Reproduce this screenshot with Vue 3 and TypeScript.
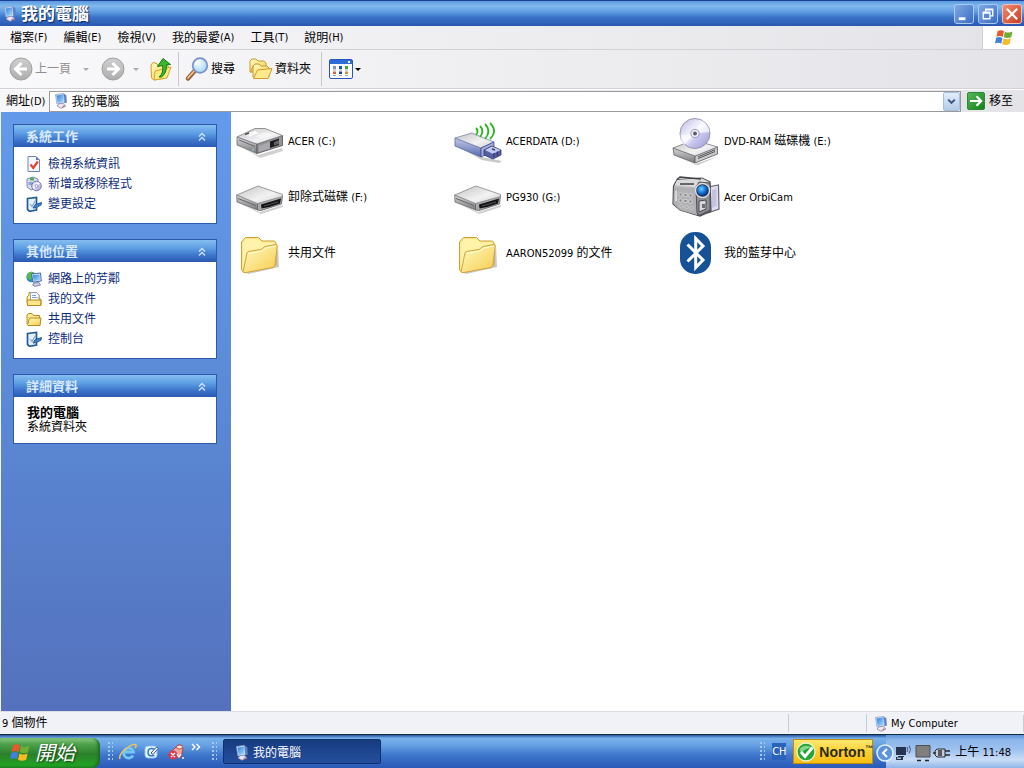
<script setup lang="ts">
import { h, ref } from 'vue'

interface Entry { text: string; icon: string }
interface Panel { title: string; links: Entry[] }

// Chinese runs are set one pixel larger than Latin runs.
const Txt = (props: { text: string }) =>
  (props.text.match(/[\u2e80-\u9fff]+|[^\u2e80-\u9fff]+/g) ?? []).map((run) =>
    h('span', { class: /[\u2e80-\u9fff]/.test(run) ? 'run-han' : 'run-latin' }, run),
  )
Txt.props = ['text']

const address = ref('我的電腦')
const menus = ['檔案(F)', '編輯(E)', '檢視(V)', '我的最愛(A)', '工具(T)', '說明(H)']

const panels: Panel[] = [
  {
    title: '系統工作',
    links: [
      { text: '檢視系統資訊', icon: 'i-info' },
      { text: '新增或移除程式', icon: 'i-programs' },
      { text: '變更設定', icon: 'i-control' },
    ],
  },
  {
    title: '其他位置',
    links: [
      { text: '網路上的芳鄰', icon: 'i-network' },
      { text: '我的文件', icon: 'i-docs' },
      { text: '共用文件', icon: 'i-folder-small' },
      { text: '控制台', icon: 'i-control' },
    ],
  },
]

const items: Entry[] = [
  { text: 'ACER (C:)', icon: 'i-hdd' },
  { text: 'ACERDATA (D:)', icon: 'i-usb' },
  { text: 'DVD-RAM 磁碟機 (E:)', icon: 'i-dvd' },
  { text: '卸除式磁碟 (F:)', icon: 'i-removable' },
  { text: 'PG930 (G:)', icon: 'i-removable' },
  { text: 'Acer OrbiCam', icon: 'i-cam' },
  { text: '共用文件', icon: 'i-folder' },
  { text: 'AARON52099 的文件', icon: 'i-folder' },
  { text: '我的藍芽中心', icon: 'i-bluetooth' },
]
</script>

<template>
  <div class="window">
    <svg class="symbols" width="0" height="0" aria-hidden="true">
      <defs>
        <linearGradient id="g-top" x1="0" y1="0" x2="1" y2="1"><stop offset="0" stop-color="#c4c4c6" /><stop offset=".6" stop-color="#f2f2f3" /><stop offset="1" stop-color="#cfcfd1" /></linearGradient>
        <linearGradient id="g-side" x1="0" y1="0" x2="0" y2="1"><stop offset="0" stop-color="#d8d8da" /><stop offset="1" stop-color="#77777b" /></linearGradient>
        <linearGradient id="g-folder" x1="0" y1="0" x2="1" y2="1"><stop offset="0" stop-color="#fffbc4" /><stop offset="1" stop-color="#f6cc4e" /></linearGradient>
        <linearGradient id="g-disc" x1="0" y1="0" x2="1" y2="1"><stop offset="0" stop-color="#b9b7e2" /><stop offset=".45" stop-color="#f6f6ff" /><stop offset=".6" stop-color="#c9c8f0" /><stop offset="1" stop-color="#9b98cf" /></linearGradient>
        <linearGradient id="g-screen" x1="0" y1="0" x2="1" y2="1"><stop offset="0" stop-color="#2f7fe0" /><stop offset="1" stop-color="#a8defc" /></linearGradient>
        <linearGradient id="g-blue" x1="0" y1="0" x2="0" y2="1"><stop offset="0" stop-color="#c3c9e8" /><stop offset="1" stop-color="#5a6ab0" /></linearGradient>
        <radialGradient id="g-lens" cx=".4" cy=".35" r=".6"><stop offset="0" stop-color="#6fd0ff" /><stop offset=".6" stop-color="#1778d8" /><stop offset="1" stop-color="#0a3c90" /></radialGradient>
        <linearGradient id="g-round" x1="0" y1="0" x2="0" y2="1"><stop offset="0" stop-color="#d0d0d0" /><stop offset="1" stop-color="#adadad" /></linearGradient>
        <linearGradient id="g-go" x1="0" y1="0" x2="1" y2="1"><stop offset="0" stop-color="#58b858" /><stop offset="1" stop-color="#11801a" /></linearGradient>
        <radialGradient id="g-glass" cx=".4" cy=".35" r=".7"><stop offset="0" stop-color="#f4fcff" /><stop offset="1" stop-color="#9fd3f5" /></radialGradient>
      </defs>

      <symbol id="i-computer" viewBox="0 0 16 16">
        <path d="M2.500 1.500 10.500 .5 11.500 10 4 11z" fill="#dfe8f6" stroke="#8d9fc6" stroke-width=".8" />
        <path d="M3.500 2.400 9.900 1.600 10.600 9 4.800 9.900z" fill="url(#g-screen)" />
        <path d="M10.700 .5 13.300 2.200 13.800 9.800 11.700 10z" fill="#5c7fc4" />
        <path d="M6 10.800 10 10.200 12.800 13 8 15.300 4 13z" fill="#e8e9f2" stroke="#8887a8" stroke-width=".8" />
        <path d="M10 12.500 12.800 13 9 15z" fill="#c86a80" />
      </symbol>

      <symbol id="i-flag" viewBox="0 0 22 20">
        <path d="M4 2.200Q8 .2 11 2.600L9.600 9Q6.400 7 2.600 8.600z" fill="#e8582c" />
        <path d="M12 3Q16 5 20.400 2.800L19 9.200Q15 11 10.700 9.200z" fill="#6dae34" />
        <path d="M2.300 9.800Q6 8 9.300 10.200L8 16.200Q4.600 14.400 1 16z" fill="#3f7fe0" />
        <path d="M10.400 10.600Q14.600 12.400 18.600 10.400L17.200 16.800Q13 18.800 9 16.800z" fill="#f8bb24" />
      </symbol>

      <symbol id="i-back" viewBox="0 0 24 24">
        <circle cx="12" cy="12" r="11" fill="url(#g-round)" stroke="#a0a0a0" />
        <path d="M12.500 6 6.500 12 12.500 18M7 12H18" fill="none" stroke="#fff" stroke-width="3" />
      </symbol>
      <symbol id="i-forward" viewBox="0 0 24 24">
        <circle cx="12" cy="12" r="11" fill="url(#g-round)" stroke="#a0a0a0" />
        <path d="M11.500 6 17.500 12 11.500 18M17 12H6" fill="none" stroke="#fff" stroke-width="3" />
      </symbol>
      <symbol id="i-up" viewBox="0 0 22 24">
        <path d="M1 8 3 5.500 7 6.500 8 9 17 7.500 19 11 16 21 4 23 1.500 21z" fill="url(#g-folder)" stroke="#d09c22" />
        <path d="M5 14 21 10 17 21 4 23z" fill="#fce982" stroke="#d9a62d" />
        <path d="M9 20Q14 16 12.500 8.500L7.500 9.500 13 1.500 20.500 7.500 16.400 7.800Q17 16 11.500 20z" fill="#39b82d" stroke="#137a13" />
      </symbol>
      <symbol id="i-search" viewBox="0 0 24 24">
        <path d="M10 13.500 3 21.500" stroke="#96613a" stroke-width="4.400" stroke-linecap="round" />
        <path d="M10 13 3 21" stroke="#f1c28b" stroke-width="1.800" stroke-linecap="round" />
        <circle cx="15" cy="8.500" r="7.300" fill="url(#g-glass)" stroke="#7793c9" stroke-width="1.700" />
        <path d="M10.500 8Q11.500 4 15.500 3.700" fill="none" stroke="#fff" stroke-width="1.800" />
      </symbol>
      <symbol id="i-folders" viewBox="0 0 24 22">
        <path d="M1 14V3L3 1H7L9 3H15L17 5V14z" fill="url(#g-folder)" stroke="#c99a2b" />
        <path d="M4 19V8L6 6H10L12 8H18L20 10V19z" fill="url(#g-folder)" stroke="#c99a2b" />
        <path d="M4.500 20.500 8.500 12 23 10.500 19 20.500z" fill="#fdeb8e" stroke="#cf9d28" />
        <path d="M1.500 14.500 4 8" stroke="#c99a2b" />
      </symbol>
      <symbol id="i-views" viewBox="0 0 24 20">
        <rect x=".5" y=".5" width="23" height="19" rx="1.500" fill="#fff" stroke="#2656b8" />
        <path d="M1 1H23V5H1z" fill="#2c6cd8" />
        <path d="M19 2H21V4H19z" fill="#fff" />
        <path d="M4 7H7V10H4z" fill="#8294b8" /><path d="M10 7H13V10H10z" fill="#1d55a6" /><path d="M16 7H19V10H16z" fill="#3ba934" />
        <path d="M4 12.500H7V15H4z" fill="#de6541" /><path d="M10 12.500H13V15H10z" fill="#16469b" /><path d="M16 12.500H19V15H16z" fill="#d18c3c" />
        <path d="M4 11H7M10 11H13M16 11H19M4 16.500H7M10 16.500H13M16 16.500H19" stroke="#9ca7c0" />
      </symbol>
      <symbol id="i-go" viewBox="0 0 18 18">
        <rect x=".5" y=".5" width="17" height="17" rx="1.500" fill="url(#g-go)" stroke="#2b8a35" />
        <path d="M3 9H14M9.500 4.300 14.200 9 9.500 13.700" fill="none" stroke="#fff" stroke-width="2.200" />
      </symbol>

      <symbol id="i-info" viewBox="0 0 16 16">
        <path d="M2 .5H10L13.500 4V15.500H2z" fill="#f6f8ff" stroke="#7184b0" />
        <path d="M10 .5V4H13.500z" fill="#5a78b6" />
        <path d="M4.500 8.500 7.300 12 11.800 5.500" fill="none" stroke="#dc4632" stroke-width="2.200" />
      </symbol>
      <symbol id="i-programs" viewBox="0 0 16 16">
        <path d="M1 3 7 1 12 3V11L5 14 1 11z" fill="#d8def2" stroke="#7e8cbb" />
        <path d="M4 1.500H8V4.500H4z" fill="#55b05c" /><path d="M2.500 6H7V9H2.500z" fill="#8ea3dc" />
        <circle cx="10.500" cy="10" r="4.800" fill="url(#g-disc)" stroke="#7778b2" />
        <circle cx="10.500" cy="10" r="1.400" fill="#fff" stroke="#7778b2" stroke-width=".7" />
      </symbol>
      <symbol id="i-control" viewBox="0 0 16 16">
        <path d="M1.500 2.500 10.500 1.500V14L3.500 15.300 1.500 13.500z" fill="#e6f1fd" stroke="#20599f" stroke-width="1.700" />
        <path d="M4 8 6 10.500 9.500 4.500" fill="none" stroke="#83a6cd" stroke-width="1.200" />
        <path d="M7 12 9.200 8.600 15.500 6.600 15 9 10.500 11.500z" fill="#4286c8" stroke="#20599f" />
      </symbol>
      <symbol id="i-network" viewBox="0 0 16 16">
        <circle cx="5.500" cy="6" r="5.200" fill="#2c8cc4" />
        <path d="M1 4Q3 0 7 1L6 4 8 6 4 9Q1 8 1 4z" fill="#56bb48" />
        <path d="M5.500 3 14.500 2 15.300 10 7 11.200z" fill="#dce6f7" stroke="#3a5ba4" stroke-width=".9" />
        <path d="M6.700 4.200 13.500 3.400 14.100 9.100 7.900 10z" fill="url(#g-screen)" />
        <path d="M8 12 13 11.500 14.500 14 9 15.500 6.500 14z" fill="#cdd0e2" stroke="#69709a" stroke-width=".8" />
      </symbol>
      <symbol id="i-docs" viewBox="0 0 16 16">
        <path d="M1 6 3 4V1.500H10.500L13 4V7L15 8.500V14.500H1.500z" fill="url(#g-folder)" stroke="#c38d1f" />
        <path d="M4.500 1.500H10.500L13 4V12H4.500z" fill="#fbfcff" stroke="#7f92bd" stroke-width=".8" />
        <path d="M6 4.500H10M6 6.500H11.500" stroke="#6f9bd0" stroke-width=".9" />
        <path d="M1 9H15L14.500 14.500H1.500z" fill="#fde789" stroke="#bd8820" />
      </symbol>
      <symbol id="i-folder-small" viewBox="0 0 16 16">
        <path d="M1 13V4L2.500 2.500H6L7.500 4.500H13.500V7" fill="#fceb92" stroke="#b88b1e" />
        <path d="M1.500 14 3.500 7H15L14 14.500H2z" fill="url(#g-folder)" stroke="#b88b1e" />
      </symbol>

      <symbol id="i-hdd" viewBox="0 0 48 48">
        <path d="M4 29 22 38 46 31 47 34 24 41z" fill="#777" opacity=".35" />
        <path d="M1 20 21 27V36.500L1 28z" fill="url(#g-side)" stroke="#6d6d70" stroke-width=".8" />
        <path d="M21 27 46.500 18.500V28.500L21 36.500z" fill="#939397" stroke="#4e4e51" stroke-width=".8" />
        <path d="M1 20 19 11.500 29 11.500 46.500 18.500 21 27z" fill="url(#g-top)" stroke="#7b7b7e" stroke-width=".8" />
        <path d="M23 29 34 25V31.500L23 35z" fill="#a9a9ad" />
        <path d="M34 24.500 43 21.500V28L34 31z" fill="#1b1b1d" />
        <path d="M38 25 43 23V27L38 28.500z" fill="#626267" />
        <path d="M10 18 20 14.500M13 19 22 15.500" stroke="#fff" stroke-width="1.500" />
        <path d="M9 17.500 13 16" stroke="#4d4d50" stroke-width="1.500" />
        <path d="M19 19.500Q28 13 37 17.500Q31 23 19 19.500z" fill="#f8f8f9" opacity=".7" />
        <path d="M3 23 19 29.500" stroke="#68686c" /><path d="M17 32V34" stroke="#9df" />
      </symbol>
      <symbol id="i-removable" viewBox="0 0 48 48">
        <path d="M5 31 24 39 47 32V34L25 41z" fill="#777" opacity=".35" />
        <path d="M.7 22 21.500 29.500V37L1 29z" fill="url(#g-side)" stroke="#707074" stroke-width=".8" />
        <path d="M21.500 29.500 46.500 22.500 45.500 31 25 37.500 21.500 37z" fill="#a9a9ad" stroke="#5f5f63" stroke-width=".8" />
        <path d="M.7 22 22 13 46.500 21.500 46.500 23.500 21.500 30.500z" fill="url(#g-top)" stroke="#858588" stroke-width=".8" />
        <path d="M25 31.500 45 25.500 44 30.500Q35 34 25.500 35.500z" fill="#151517" />
        <path d="M28 33 42 29" stroke="#505054" />
        <path d="M2 25.500 20 32.500" stroke="#636367" />
      </symbol>
      <symbol id="i-usb" viewBox="0 0 48 48">
        <path d="M4 30 28 40 48 44 45 46 28 43z" fill="#777" opacity=".4" />
        <path d="M1 21 27 31V40L1 29z" fill="url(#g-blue)" stroke="#5966a5" stroke-width=".8" />
        <path d="M1 21 18 16 40 25 27 31z" fill="url(#g-top)" stroke="#7c84ae" stroke-width=".8" />
        <path d="M27 31 40 25V34L27 40z" fill="#a4add8" stroke="#3d488d" stroke-width=".8" />
        <path d="M30 33 38 29 47 33V38L39 42 30 38z" fill="#5661a5" stroke="#29346e" stroke-width=".8" />
        <path d="M31 33 38 29.500 46.500 33 39 37z" fill="#c4caed" />
        <path d="M38 32 41 33M40 36V40M43.500 34.500V39" stroke="#353b72" stroke-width="1.500" />
        <path d="M22 11Q25 14 22 18M26 9Q31 14 26 20M31 7Q38 14 31 22M36 6Q44 14 36 22" fill="none" stroke="#28b51f" stroke-width="1.800" />
      </symbol>
      <symbol id="i-dvd" viewBox="0 0 48 48">
        <path d="M4 39 23 47 47 39 25 48.500z" fill="#777" opacity=".4" />
        <path d="M1 31 23 39V46L2 38z" fill="url(#g-side)" stroke="#626266" stroke-width=".8" />
        <path d="M23 39 45.500 30V37L23 46z" fill="#c9c9cc" stroke="#5b5b60" stroke-width=".8" />
        <path d="M1 31 22 23 45.500 30 23 39z" fill="url(#g-top)" stroke="#77777a" stroke-width=".8" />
        <path d="M26 41.500 43 34.500M26 39.800 43 32.800" stroke="#555559" stroke-width="1" />
        <circle cx="23" cy="16.500" r="15" fill="url(#g-disc)" stroke="#8d8ba9" stroke-width=".9" />
        <path d="M23 16.500 31 4Q37 9 37.500 15z" fill="#fff" opacity=".7" />
        <path d="M23 16.500 12 28Q8 23 8.500 18z" fill="#fff" opacity=".6" />
        <circle cx="23" cy="16.500" r="4.200" fill="#eeeef5" stroke="#9a97bd" />
        <circle cx="23" cy="16.500" r="1.900" fill="#555d6b" />
      </symbol>
      <symbol id="i-cam" viewBox="0 0 48 48">
        <path d="M36 14 46.500 12 47 36 36 40z" fill="#dcdcf2" stroke="#66666c" stroke-width="1.200" />
        <path d="M40 17 44.500 15.500V33L40 35z" fill="#c3c3e0" />
        <path d="M1.500 13 5 6.500 30 5 38 9 39 38 28 43 8 37 1 31z" fill="url(#g-side)" stroke="#4b4b50" stroke-width="1.200" />
        <path d="M2 13.500 24 15 25 42 8 37 1.500 31z" fill="#b1b1b4" />
        <path d="M5 7 30 5.500 37 9 25 14.500 3 12z" fill="#dadadc" />
        <path d="M5 6.500 8 4 29 6M8 11H22" fill="none" stroke="#404044" stroke-width="1.400" />
        <path d="M24 14 27 9 38 10 38 37 28 42 25 40z" fill="#909094" stroke="#525257" />
        <circle cx="30.500" cy="17.500" r="7" fill="#1e2b42" stroke="#d9d9dd" stroke-width="1.500" />
        <circle cx="30.500" cy="17.500" r="5.500" fill="url(#g-lens)" />
        <path d="M27 28 34 27V36L27 39z" fill="#d7d7dc" stroke="#46464d" /><path d="M30 31H33V35H30z" fill="#6c6c76" />
        <g fill="#87878b" stroke="#ededee" stroke-width=".6"><path d="M7 20H10V23H7zM12 20.500H15V23.500H12zM17 21H20V24H17zM7 26H10V29H7zM12 26.500H15V29.500H12zM17 27H20V30H17zM8 32H11V34H8zM13 33H16V35H13zM18 34H21V36H18z" /></g>
        <path d="M4 18V28" stroke="#e5e5e7" stroke-width="1.500" />
      </symbol>
      <symbol id="i-folder" viewBox="0 0 48 48">
        <path d="M8 42 39 37 42 16 43 38 12 45z" fill="#777" opacity=".4" />
        <path d="M5.500 41V13L9.500 8.500H22.500L26 12H38.500L40 14V36L8 43z" fill="#fde98c" stroke="#cfa031" />
        <path d="M7 36V14L10 10H22L25.500 13.500H38.500V17L12 23 8 40z" fill="#fff3ab" />
        <path d="M7 43 11 24Q11.500 22.500 13.500 22.300L25 20.500 29 17.500 40 15.500Q41.500 15.500 41.300 17L38.800 36.500Q38.500 38 37 38.500L9 43.700z" fill="url(#g-folder)" stroke="#d3a337" />
        <path d="M12.500 24.500 26 22 30 19 40 17" fill="none" stroke="#fffdd9" />
      </symbol>
      <symbol id="i-bluetooth" viewBox="0 0 48 48">
        <rect x="8" y="3" width="31" height="42" rx="15" fill="#175297" />
        <path d="M15.500 15.500 31 31 23.700 38.500V9.500L31 17 15.500 32.500" fill="none" stroke="#fff" stroke-width="3" />
      </symbol>

      <symbol id="i-ie" viewBox="0 0 18 18">
        <path d="M14 12.500A5 5 0 1 1 14.500 9H5.500" fill="none" stroke="#72c8fa" stroke-width="2.800" />
        <path d="M1 16Q-.5 12 6 6.500Q15 -.5 17 2Q17.500 3 16 5" fill="none" stroke="#f2c555" stroke-width="1.500" />
      </symbol>
      <symbol id="i-desktop" viewBox="0 0 18 18">
        <rect x="2" y="3" width="12" height="12" rx="3" fill="#e9f6ff" stroke="#8cc4f2" />
        <path d="M11.500 6Q5 4 5 9.500Q5 14 11.500 12.500" fill="none" stroke="#2875bd" stroke-width="1.500" />
        <path d="M8 10 13.500 4 15 5.500 10 11.500z" fill="#fff" stroke="#345a91" />
      </symbol>
      <symbol id="i-horn" viewBox="0 0 18 18">
        <path d="M1 12 11 2Q15 1 16 6L14 14 4 15z" fill="#f0a79c" stroke="#b93f40" />
        <ellipse cx="12.500" cy="4" rx="3" ry="2" fill="#fff0e8" stroke="#b93f40" />
        <circle cx="6" cy="12" r="4.500" fill="#d8394e" />
        <path d="M4 10 8 14M8 10 4 14M10 11 12 14 14 11M15 15H17" fill="none" stroke="#fff" stroke-width="1.300" />
      </symbol>
      <symbol id="i-tick" viewBox="0 0 20 20">
        <circle cx="10" cy="10" r="9" fill="#27a53b" stroke="#e7f4d2" stroke-width="1.300" />
        <path d="M3.500 7Q9 1 16 6Q9 6 5 11z" fill="#a1e29e" opacity=".8" />
        <path d="M5 10 9 14.500 16.500 5.500" fill="none" stroke="#fff" stroke-width="2.800" />
      </symbol>
      <symbol id="i-hide" viewBox="0 0 18 18">
        <circle cx="9" cy="9" r="8" fill="#5f93dc" stroke="#e5f0fd" stroke-width="1.500" />
        <path d="M11 5 7 9 11 13" fill="none" stroke="#fff" stroke-width="2" />
      </symbol>
      <symbol id="i-wireless" viewBox="0 0 18 18">
        <path d="M1 3H11V11H1zM3 12H9V13H3zM1 13H8V16H1z" fill="#273451" />
        <path d="M2 13.500H6V15H2z" fill="#aebde0" />
        <path d="M12 3Q13.500 5.500 12 8M14 1.500Q17 5.500 14 9.500" fill="none" stroke="#4a5a79" />
      </symbol>
      <symbol id="i-display" viewBox="0 0 18 18">
        <path d="M2 1.500H16V13H2z" fill="#807f7e" stroke="#4f4f52" />
        <path d="M3 16.500H7M11 16.500H15" stroke="#222" stroke-width="1.500" fill="none" />
      </symbol>
      <symbol id="i-plug" viewBox="0 0 18 18">
        <path d="M4 5H12V13H4L2 11V7z" fill="#c9ccd2" stroke="#242a35" />
        <path d="M12 7H17M12 11H17M0 9H3M6 6V12M8 6V12" stroke="#242a35" stroke-width="1.400" />
      </symbol>
    </svg>

    <header class="titlebar">
      <svg class="ic16"><use href="#i-computer" /></svg>
      <h1>我的電腦</h1>
      <button class="cap" aria-label="最小化"><svg viewBox="0 0 19 19"><path d="M4 14.500H11" stroke="#fff" stroke-width="3" /></svg></button>
      <button class="cap" aria-label="還原"><svg viewBox="0 0 19 19"><path d="M7 7V4.500H14.500V11.500H12M7 5H14.500" fill="none" stroke="#fff" stroke-width="1.400" /><path d="M4.500 7.500H11.500V14.500H4.500zM4.500 8.500H11.500" fill="none" stroke="#fff" stroke-width="1.400" /></svg></button>
      <button class="cap close" aria-label="關閉"><svg viewBox="0 0 19 19"><path d="M4 4 15 15M15 4 4 15" stroke="#fff" stroke-width="2.300" /></svg></button>
    </header>

    <nav class="menubar">
      <button v-for="m in menus" :key="m"><Txt :text="m" /></button>
      <span class="brand"><svg><use href="#i-flag" /></svg></span>
    </nav>

    <div class="toolbar">
      <button class="tool back" disabled><svg class="ic24"><use href="#i-back" /></svg><Txt text="上一頁" /></button>
      <button class="arrow" disabled aria-label="返回清單"></button>
      <button class="tool" disabled aria-label="下一頁"><svg class="ic24"><use href="#i-forward" /></svg></button>
      <button class="arrow" disabled aria-label="前進清單"></button>
      <button class="tool up" aria-label="上移"><svg><use href="#i-up" /></svg></button>
      <span class="sep"></span>
      <button class="tool"><svg class="ic24"><use href="#i-search" /></svg><Txt text="搜尋" /></button>
      <button class="tool folders"><svg class="ic24"><use href="#i-folders" /></svg><Txt text="資料夾" /></button>
      <span class="sep wide"></span>
      <button class="tool views" aria-label="檢視方式"><svg><use href="#i-views" /></svg><i class="tri"></i></button>
    </div>

    <div class="address">
      <label for="addr"><Txt text="網址(D)" /></label>
      <div class="field">
        <svg class="ic16"><use href="#i-computer" /></svg>
        <input id="addr" v-model="address" type="text" />
        <button class="drop" aria-label="位址清單"><svg viewBox="0 0 16 18"><path d="M4.500 7 8 10.500 11.500 7" fill="none" stroke="#3c5580" stroke-width="2.200" /></svg></button>
      </div>
      <button class="go"><svg><use href="#i-go" /></svg><Txt text="移至" /></button>
    </div>

    <div class="body">
      <aside>
        <section v-for="p in panels" :key="p.title" class="panel">
          <h2>{{ p.title }}<svg viewBox="0 0 10 10"><path d="M2 4.500 5 1.500 8 4.500M2 8.500 5 5.500 8 8.500" /></svg></h2>
          <ul>
            <li v-for="l in p.links" :key="l.text">
              <a href="#"><svg class="ic16"><use :href="'#' + l.icon" /></svg>{{ l.text }}</a>
            </li>
          </ul>
        </section>
        <section class="panel">
          <h2>詳細資料<svg viewBox="0 0 10 10"><path d="M2 4.500 5 1.500 8 4.500M2 8.500 5 5.500 8 8.500" /></svg></h2>
          <div class="details"><strong>我的電腦</strong><span>系統資料夾</span></div>
        </section>
      </aside>
      <main>
        <a v-for="it in items" :key="it.text" class="item" href="#">
          <svg><use :href="'#' + it.icon" /></svg>
          <span><Txt :text="it.text" /></span>
        </a>
      </main>
    </div>

    <footer class="status">
      <span class="count"><Txt text="9 個物件" /></span>
      <span class="blank"></span>
      <span class="zone"><svg class="ic16"><use href="#i-computer" /></svg><Txt text="My Computer" /></span>
    </footer>

    <div class="taskbar">
      <button class="start"><svg><use href="#i-flag" /></svg>開始</button>
      <span class="grip"></span>
      <div class="quick">
        <button aria-label="Internet Explorer"><svg><use href="#i-ie" /></svg></button>
        <button aria-label="顯示桌面"><svg><use href="#i-desktop" /></svg></button>
        <button aria-label="音訊"><svg><use href="#i-horn" /></svg></button>
        <button class="more" aria-label="更多"><svg viewBox="0 0 10 8"><path d="M1 1 4 4 1 7M5.500 1 8.500 4 5.500 7" fill="none" stroke="#fff" stroke-width="1.400" /></svg></button>
      </div>
      <span class="grip"></span>
      <button class="task"><svg class="ic16"><use href="#i-computer" /></svg>我的電腦</button>
      <span class="grip right"></span>
      <button class="lang">CH</button>
      <button class="norton"><svg><use href="#i-tick" /></svg><span>Norton<sup>™</sup></span></button>
      <div class="tray">
        <button class="hide" aria-label="隱藏圖示"><svg><use href="#i-hide" /></svg></button>
        <svg><use href="#i-wireless" /></svg>
        <svg><use href="#i-display" /></svg>
        <svg><use href="#i-plug" /></svg>
        <time><Txt text="上午 11:48" /></time>
      </div>
    </div>
  </div>
</template>

<style>
html, body { height: 100%; overflow: hidden; }
.run-han { font-size: 12px; white-space: pre; }
.run-latin { font-size: 11px; white-space: pre; }
</style>

<style scoped>
.window {
  height: 100vh;
  display: flex;
  flex-direction: column;
  font: 12px/16px "DejaVu Sans Condensed", "Noto Sans CJK TC", sans-serif;
  color: #000;
  background: #fff;
}
.symbols { display: block; flex: none; }
button { font: inherit; color: inherit; border: 0; padding: 0; margin: 0; background: none; display: flex; align-items: center; white-space: nowrap; }
a { color: inherit; text-decoration: none; }
svg { flex: none; display: block; }
.ic16 { width: 16px; height: 16px; }
.ic24 { width: 24px; height: 24px; }

.titlebar {
  flex: none;
  height: 26px;
  box-sizing: border-box;
  display: flex;
  align-items: center;
  gap: 2px;
  padding: 0 2px;
  border-top: 1px solid #1c3f95;
  background: linear-gradient(#5b9ae0, #81b9ee 20%, #5c9be0 45%, #3a73c9 65%, #2a57b0 100%);
}
.titlebar h1 {
  flex: 1;
  margin: 0 0 0 1px;
  font-size: 17px;
  line-height: 24px;
  font-weight: 700;
  color: #fff;
  text-shadow: 1px 1px 1px #10265f;
}
.cap {
  width: 20px;
  height: 20px;
  margin-left: 2px;
  box-sizing: border-box;
  justify-content: center;
  border: 1px solid #a9c8f2;
  border-radius: 3px;
  background: linear-gradient(135deg, #7fa9e4, #3a6cc3);
}
.cap svg { width: 18px; height: 18px; }
.close { background: linear-gradient(135deg, #f08c70, #cb3c20); border-color: #f1c0b8; }

.menubar {
  flex: none;
  height: 23px;
  display: flex;
  align-items: center;
  gap: 16px;
  padding-left: 10px;
  background: linear-gradient(90deg, #f7f6f8, #e4e3e7);
  border-bottom: 1px solid #d3d1d6;
}
.brand { align-self: stretch; width: 41px; margin-left: auto; background: #fff; display: flex; align-items: center; justify-content: center; border-left: 1px solid #d3d1d6; }
.brand svg { width: 20px; height: 18px; }

.toolbar {
  flex: none;
  height: 38px;
  display: flex;
  align-items: center;
  padding-left: 9px;
  background: linear-gradient(90deg, #f9f8fa, #e4e3e7);
  border-bottom: 1px solid #d3d1d6;
}
.tool { gap: 2px; }
.back { color: #8f8f8f; }
.arrow { width: 30px; justify-content: center; height: 24px; }
.arrow::after, .tri { content: ""; border: 3px solid transparent; border-top-color: #aaa; border-bottom: 0; }
.arrow + .tool + .arrow { width: 22px; }
.up { margin-left: 3px; }
.up svg { width: 22px; height: 24px; }
.sep { width: 1px; height: 34px; margin: 0 6px; background: #c9c7cd; }
.sep.wide { margin: 0 7px 0 10px; }
.folders { margin-left: 14px; }
.views svg { width: 24px; height: 20px; }
.tri { border-top-color: #000; }

.address {
  flex: none;
  height: 22px;
  display: flex;
  align-items: center;
  padding-left: 6px;
  border-top: 1px solid #fff;
  background: linear-gradient(90deg, #f7f6f8, #e4e3e7);
}
.field {
  flex: 1;
  height: 21px;
  box-sizing: border-box;
  display: flex;
  align-items: center;
  margin-left: 4px;
  padding-left: 3px;
  border: 1px solid #9a9a9e;
  background: #fff;
}
.field input { flex: 1; min-width: 0; border: 0; outline: 0; padding: 1px 0 0 2px; font: inherit; background: none; }
.drop { width: 17px; height: 19px; box-sizing: border-box; justify-content: center; border: 1px solid #a8bedd; border-radius: 2px; background: linear-gradient(#e3edfb, #b4cbe9); }
.drop svg { width: 15px; height: 17px; }
.go { gap: 4px; padding: 0 11px 0 6px; }
.go svg { width: 18px; height: 18px; }

.body { flex: 1; min-height: 0; display: flex; border-left: 1px solid #f3f4f8; }
aside {
  flex: none;
  width: 230px;
  box-sizing: border-box;
  padding: 12px 14px 0 12px;
  display: flex;
  flex-direction: column;
  gap: 15px;
  background: linear-gradient(#639aea, #5c8dd9 40%, #5471bd);
}
.panel { border: 1px solid #2c59ad; background: #fff; }
.panel h2 {
  display: flex;
  align-items: center;
  justify-content: space-between;
  height: 21px;
  margin: 0;
  padding: 1px 9px 0 12px;
  font-size: 13px;
  font-weight: 700;
  color: #d9e8fb;
  background: linear-gradient(#86bef0, #5a9be2 40%, #3c74ca 70%, #2b59b2);
}
.panel h2 svg { width: 10px; height: 10px; fill: none; stroke: #cfe1fa; stroke-width: 1.4; }
.panel ul { list-style: none; margin: 0; padding: 7px 12px 9px; }
.panel li a { display: flex; align-items: center; gap: 6px; height: 20px; color: #0c2c7c; }
.details { display: flex; flex-direction: column; padding: 9px 13px; line-height: 14px; }
.details strong { font-size: 13px; }

main {
  flex: 1;
  min-width: 0;
  display: grid;
  grid-template-columns: repeat(auto-fill, 210px);
  grid-auto-rows: 48px;
  gap: 8px;
  align-content: start;
  padding: 5px 0 0 5px;
}
.item { display: flex; align-items: center; gap: 4px; }
.item svg { width: 48px; height: 48px; }

.status {
  flex: none;
  height: 22px;
  display: flex;
  align-items: center;
  border-top: 1px solid #dddce2;
  background: #f1f2f7;
}
.count { flex: 1; padding: 1px 0 0 2px; }
.blank { width: 77px; height: 18px; border: solid #cbcbd2; border-width: 0 1px; }
.zone { width: 150px; display: flex; align-items: center; gap: 2px; padding: 1px 0 0 6px; border-right: 1px solid #cbcbd2; }

.taskbar {
  flex: none;
  height: 33px;
  display: flex;
  align-items: center;
  border-top: 1px solid #102b3a;
  color: #fff;
  background: linear-gradient(#24539f, #78b0ea 10%, #68a2e4 30%, #3f77cd 60%, #2a59b8);
}
.start {
  width: 100px;
  height: 30px;
  align-self: flex-end;
  gap: 4px;
  padding-left: 9px;
  border-radius: 0 8px 8px 0;
  font-size: 20px;
  font-style: italic;
  text-shadow: 1px 1px 2px #123d12;
  background: linear-gradient(#8bca84, #4ea24c 20%, #2b7f2a 55%, #1fae22);
  box-shadow: inset -2px -1px 3px #1d6c1f;
}
.start svg { width: 22px; height: 22px; }
.grip { width: 5px; height: 20px; margin: 0 6px 0 8px; background: radial-gradient(circle at 1px 1px, #a5c8f3 1px, transparent 1px) 0 0 / 4px 4px; }
.quick { display: flex; align-items: center; gap: 6px; width: 93px; }
.quick svg { width: 18px; height: 18px; }
.more { align-self: flex-start; }
.quick .more svg { width: 10px; height: 8px; }
.quick + .grip { margin: 0 6px 0 0; }
.task {
  width: 158px;
  height: 25px;
  box-sizing: border-box;
  gap: 3px;
  padding: 2px 0 0 10px;
  border: 1px solid #12306e;
  border-radius: 2px;
  background: linear-gradient(#173b80, #244f9d);
}
.right { margin: 0 7px 0 auto; }
.lang { height: 17px; width: 14px; justify-content: center; margin-right: 7px; font-size: 11px; background: #2b62bb; }
.norton {
  width: 80px;
  height: 25px;
  box-sizing: border-box;
  gap: 3px;
  padding-left: 2px;
  border: 1px solid #c08a10;
  font: 700 14px/20px "Liberation Sans", sans-serif;
  color: #2b2a20;
  background: linear-gradient(#ffe873, #fdd02f 50%, #f7bd12);
}
.norton svg { width: 20px; height: 20px; }
.norton sup { font-size: 8px; line-height: 8px; }
.tray {
  align-self: stretch;
  display: flex;
  align-items: center;
  gap: 1px;
  padding: 2px 13px 0 0;
  margin-left: 13px;
  color: #000;
  background: linear-gradient(#5c93d8, #8db6ea 15%, #9fc2ef 45%, #c9dcf6 75%, #8fb5e8);
}
.hide { margin-left: -10px; }
.tray svg { width: 18px; height: 18px; }
.tray time { margin-left: 3px; white-space: nowrap; }
</style>
